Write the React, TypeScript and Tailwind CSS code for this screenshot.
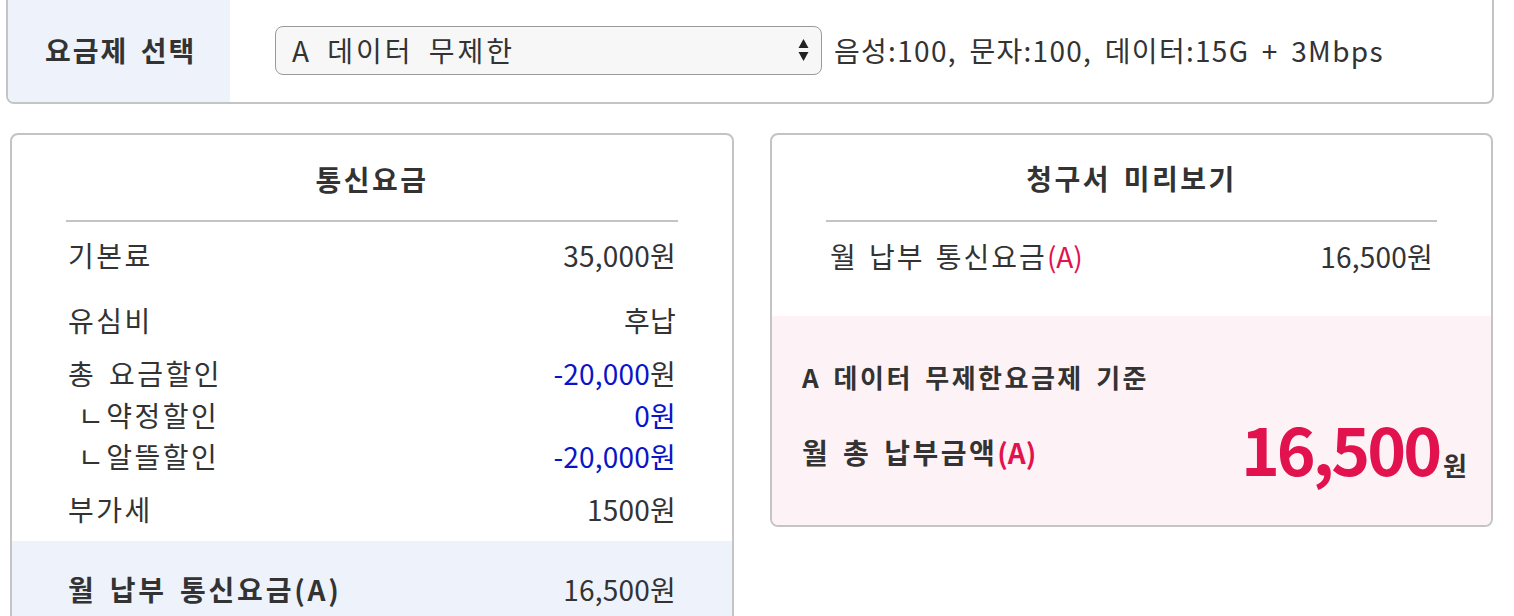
import React from "react";

const F = { fontFamily: '"Noto Sans CJK KR", "Noto Sans", sans-serif' };

function K({ children, className = "" }: { children: React.ReactNode; className?: string }) {
  return <span className={`tracking-[2.5px] [word-spacing:4px] ${className}`}>{children}</span>;
}

function Row({ label, value, h, valueClass = "", indent = false }: { label: string; value: React.ReactNode; h: string; valueClass?: string; indent?: boolean }) {
  return (
    <div className={`flex items-center justify-between ${h}`}>
      <K className={indent ? "pl-[10px]" : ""}>{label}</K>
      <span className={`tracking-[0.2px] ${valueClass}`}>{value}</span>
    </div>
  );
}

export default function App() {
  return (
    <div style={F} className="w-[1514px] h-[616px] overflow-hidden bg-white text-[#333] text-[28px] leading-none">
      {/* top selector panel */}
      <div className="ml-[6px] w-[1488px] h-[114px] -mt-[10px] border-2 border-[#c4c4c4] rounded-[8px] flex overflow-hidden">
        <div className="w-[222px] bg-[#eef2fb] flex items-center pl-[37px] pt-[6px] font-bold">
          <span className="tracking-[2px] [word-spacing:4px]">요금제 선택</span>
        </div>
        <div className="flex items-center pl-[45px] pt-[6px]">
          <div className="w-[547px] h-[49px] border-[1.5px] border-[#9a9a9a] rounded-[8px] bg-[#f7f7f7] flex items-center justify-between pl-[16px] pr-[12px]">
            <span className="tracking-[3px] [word-spacing:6px]">A 데이터 무제한</span>
            <svg width="11" height="24" viewBox="0 0 11 24"><path d="M5.5 1 L10.5 10 L0.5 10 Z" fill="#222" /><path d="M0.5 14 L10.5 14 L5.5 23 Z" fill="#222" /></svg>
          </div>
          <span className="ml-[12px] whitespace-nowrap tracking-[1.3px] [word-spacing:5px]">음성:100, 문자:100, 데이터:15G + 3Mbps</span>
        </div>
      </div>

      {/* cards */}
      <div className="flex gap-[36px] pl-[10px] mt-[29px] items-start">
        {/* left card */}
        <div className="w-[724px] h-[520px] border-2 border-[#c4c4c4] rounded-[8px] overflow-hidden flex flex-col">
          <div className="h-[85px] flex items-center justify-center font-bold pt-[3px]"><K>통신요금</K></div>
          <div className="mx-[54px] h-[2px] bg-[#c4c4c4]" />
          <div className="px-[56px]">
            <Row label="기본료" value="35,000원" h="h-[66px]" />
            <Row label="유심비" value="후납" h="h-[64px]" />
            <Row label="총 요금할인" value={<><span className="text-[#0a14c8]">-20,000</span>원</>} h="h-[42px]" />
            <Row label="ㄴ약정할인" value="0원" valueClass="text-[#0a14c8]" h="h-[41px]" indent />
            <Row label="ㄴ알뜰할인" value="-20,000원" valueClass="text-[#0a14c8]" h="h-[42px]" indent />
            <Row label="부가세" value="1500원" h="h-[64px]" />
          </div>
          <div className="flex-1 bg-[#eef2fb] px-[56px] pt-[34px]">
            <div className="flex items-center justify-between h-[28px]">
              <span className="font-bold tracking-[2.8px] [word-spacing:4px]">월 납부 통신요금(A)</span>
              <span className="tracking-[0.2px]">16,500원</span>
            </div>
          </div>
        </div>

        {/* right card */}
        <div className="w-[723px] h-[394px] border-2 border-[#c4c4c4] rounded-[8px] overflow-hidden flex flex-col">
          <div className="h-[85px] flex items-center justify-center font-bold"><K>청구서 미리보기</K></div>
          <div className="mx-[54px] h-[2px] bg-[#c4c4c4]" />
          <div className="px-[58px] h-[94px] pt-[1px]">
            <div className="flex items-center justify-between h-[66px]">
              <span className="tracking-[2px] [word-spacing:3px]">월 납부 통신요금<span className="text-[#e2124f] tracking-normal">(A)</span></span>
              <span className="tracking-[0.2px]">16,500원</span>
            </div>
          </div>
          <div className="flex-1 bg-[#fdf2f6] pl-[30px] pr-[24px] pt-[48px]">
            <div className="font-bold text-[26px]"><K>A 데이터 무제한요금제 기준</K></div>
            <div className="flex items-end justify-between mt-[24px]">
              <K className="font-bold mb-[14px]">월 총 납부금액<span className="text-[#e2124f] tracking-normal">(A)</span></K>
              <span className="font-bold flex items-baseline">
                <span className="text-[66px] text-[#e2124f] tracking-[-3px] mr-[4px]">16,500</span>
                <span className="text-[26px]">원</span>
              </span>
            </div>
          </div>
        </div>
      </div>
    </div>
  );
}
